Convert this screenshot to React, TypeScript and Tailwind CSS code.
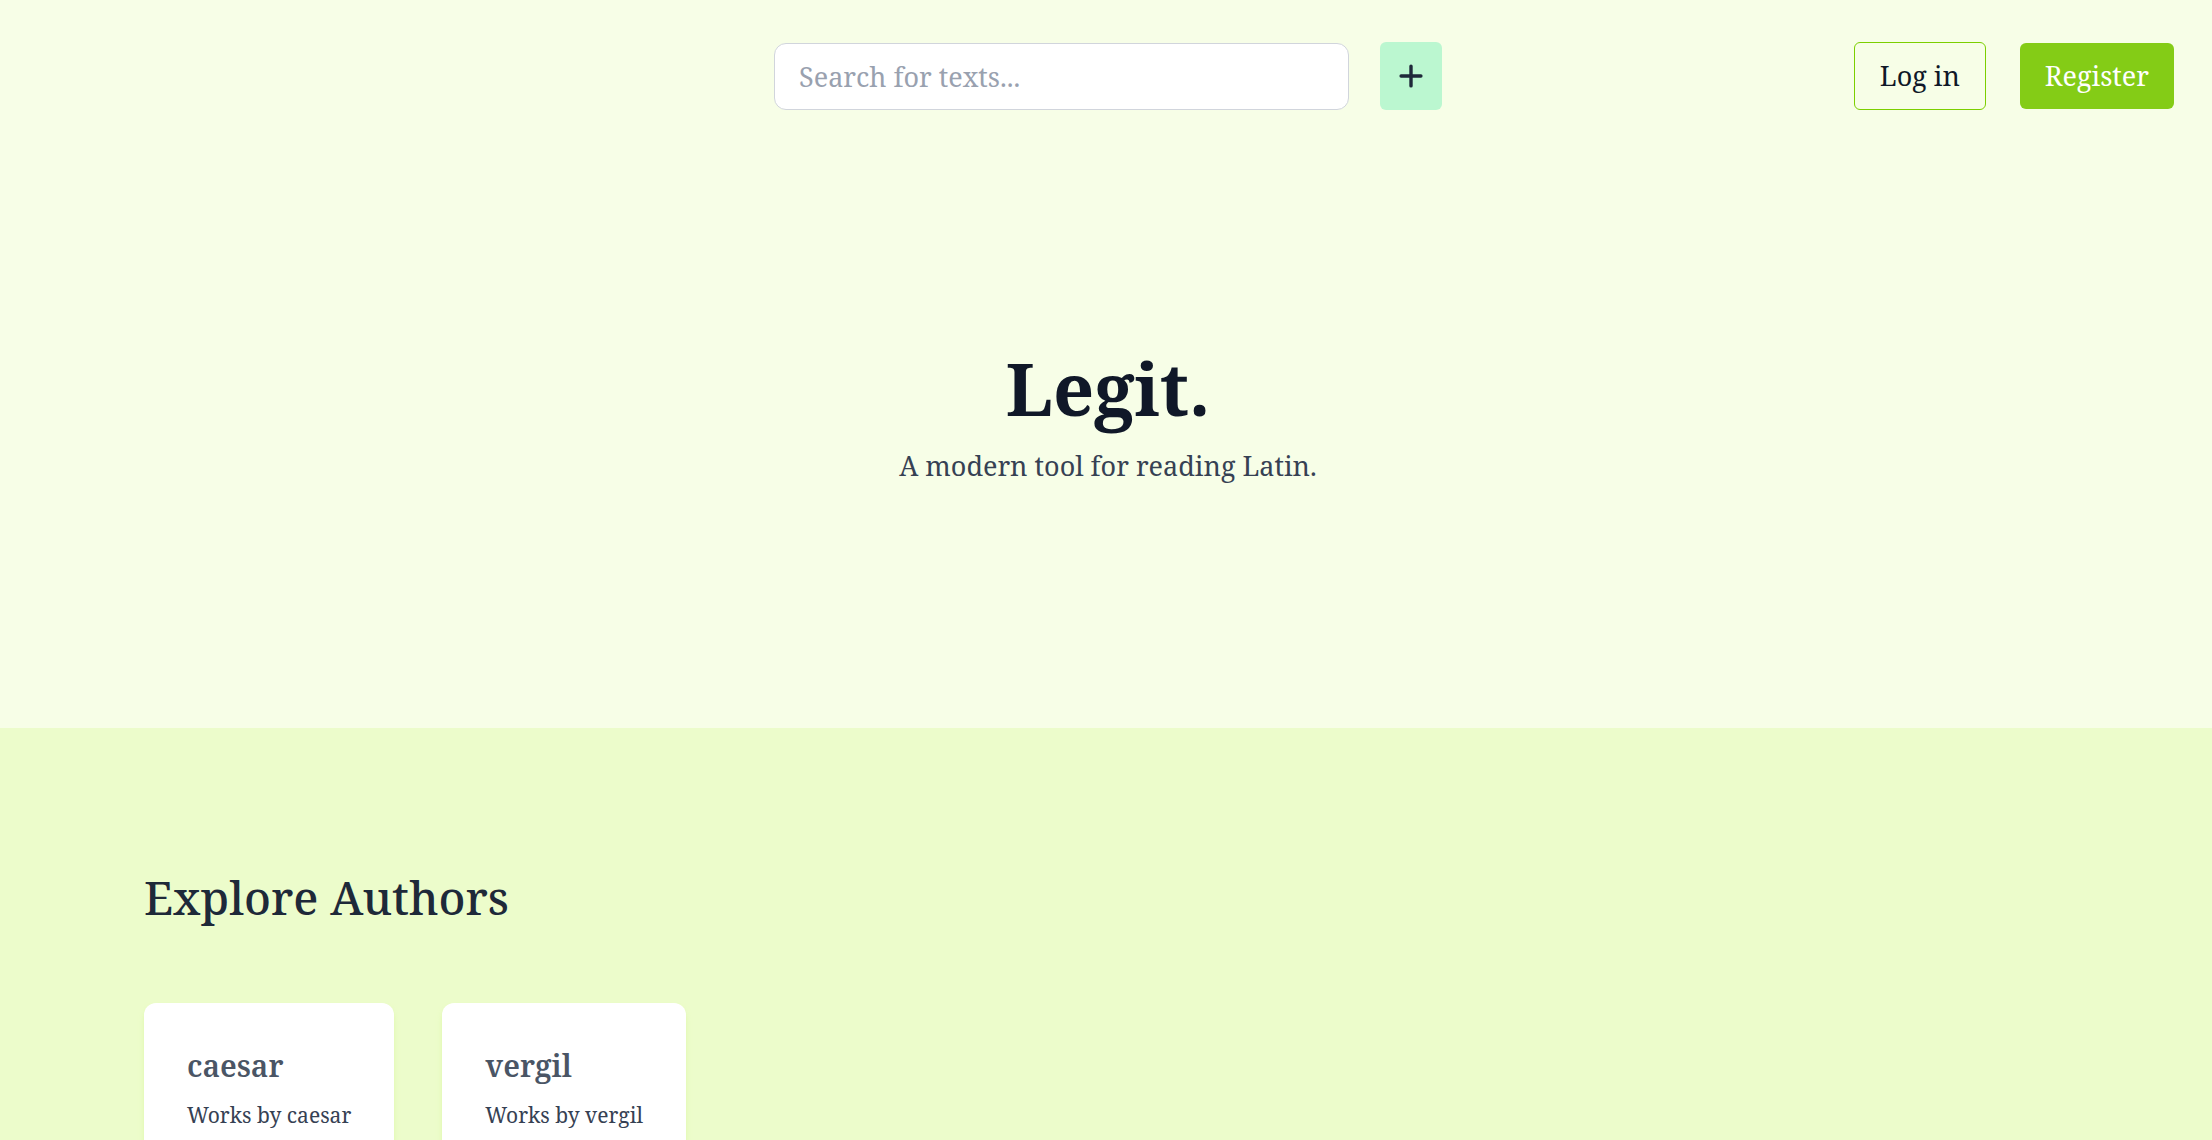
import { Plus } from "lucide-react";

const authors = ["caesar", "vergil"];

export default function App() {
  return (
    <div className="min-h-screen bg-[#ecfccb]" style={{ fontFamily: '"Noto Serif", "DejaVu Serif", serif' }}>
      <section className="h-[728px] bg-[#f7fee7]">
        <header className="grid grid-cols-[1fr_auto_1fr] items-center pt-[42px]">
          <div />
          <div className="ml-[4px] flex items-center gap-[31px]">
            <input
              type="text"
              placeholder="Search for texts..."
              className="h-[67px] w-[575px] rounded-xl border border-gray-300 bg-white px-[24px] text-[27px] text-gray-800 placeholder:text-gray-400 outline-none"
            />
            <button className="flex h-[68px] w-[62px] items-center justify-center rounded-md bg-[#bbf7d0] text-gray-800">
              <Plus size={34} strokeWidth={2.4} />
            </button>
          </div>
          <div className="flex items-center justify-end gap-[34px] pr-[38px]">
            <button className="h-[68px] rounded-md border border-lime-500 px-[25px] text-[27px] text-gray-900">
              Log in
            </button>
            <button className="h-[66px] rounded-md bg-[#84cc16] px-[25px] text-[27px] text-white">
              Register
            </button>
          </div>
        </header>

        <div className="mt-[242px] flex flex-col items-center pl-[4px]">
          <h1 className="text-[72px] font-bold leading-none text-gray-900">Legit.</h1>
          <p className="mt-[28px] text-[27px] leading-none text-gray-700">A modern tool for reading Latin.</p>
        </div>
      </section>

      <section className="px-[144px] pt-[146px]">
        <h2 className="text-[46px] font-medium leading-none text-gray-800">Explore Authors</h2>
        <div className="mt-[83px] flex gap-[48px]">
          {authors.map((a) => (
            <div key={a} className="rounded-xl bg-white px-[43px] pt-[48px] pb-[40px] shadow-md shadow-lime-200/60">
              <h3 className="text-[30px] font-semibold leading-none text-gray-600">{a}</h3>
              <p className="mt-[24px] text-[21px] leading-none text-gray-700">Works by {a}</p>
            </div>
          ))}
        </div>
      </section>
    </div>
  );
}
